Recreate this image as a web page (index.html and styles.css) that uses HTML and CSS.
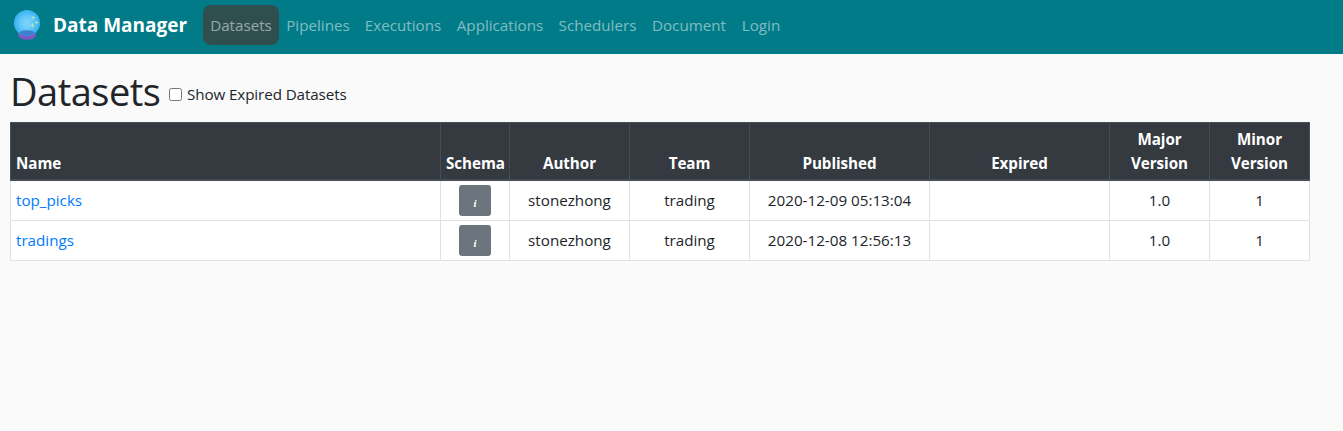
FILE: index.html
```html
<!DOCTYPE html>
<html lang="en">
<head>
<meta charset="utf-8">
<title>Data Manager</title>
<link rel="stylesheet" href="styles.css">
</head>
<body>
<nav class="navbar">
  <a class="brand">
    <svg class="logo" viewBox="0 0 32 32" width="32" height="32">
      <defs>
        <radialGradient id="ball"><stop offset="0" stop-color="#81d4fa"/><stop offset=".45" stop-color="#68cbf9"/><stop offset="1" stop-color="#35b2f0"/></radialGradient>
        <clipPath id="ball-clip"><circle cx="17" cy="14" r="12.7"/></clipPath>
      </defs>
      <ellipse cx="17" cy="26" rx="9" ry="4.8" fill="#7e57c2"/>
      <circle cx="17" cy="14" r="13" fill="url(#ball)"/>
      <ellipse cx="17" cy="26" rx="9" ry="4.8" fill="#3f7fd2" clip-path="url(#ball-clip)"/>
      <path d="M23.2 6.7v4M21.2 8.7h4M26.7 12v3M25.2 13.5h3M22.5 14.6v4M20.5 16.6h4" stroke="#b5e3b5" stroke-width="1"/>
    </svg>
    <span class="brand-name">Data Manager</span>
  </a>
  <ul class="nav">
    <li class="active datasets"><a>Datasets</a></li>
    <li class="pipelines"><a>Pipelines</a></li>
    <li class="executions"><a>Executions</a></li>
    <li class="applications"><a>Applications</a></li>
    <li class="schedulers"><a>Schedulers</a></li>
    <li class="document"><a>Document</a></li>
    <li class="login"><a>Login</a></li>
  </ul>
</nav>
<main class="page">
  <div class="heading">
    <h1>Datasets</h1>
    <label class="filter"><input type="checkbox"><span>Show Expired Datasets</span></label>
  </div>
  <table class="datasets-table">
    <colgroup><col class="c-name"><col class="c-schema"><col class="c-person"><col class="c-person"><col class="c-time"><col class="c-time"><col class="c-version"><col class="c-version"></colgroup>
    <thead>
      <tr><th class="left">Name</th><th>Schema</th><th>Author</th><th>Team</th><th>Published</th><th>Expired</th><th>Major<br>Version</th><th>Minor<br>Version</th></tr>
    </thead>
    <tbody>
      <tr><td class="left"><a>top_picks</a></td><td class="schema"><button class="info"><i>i</i></button></td><td>stonezhong</td><td>trading</td><td>2020-12-09 05:13:04</td><td></td><td>1.0</td><td>1</td></tr>
      <tr><td class="left"><a>tradings</a></td><td class="schema"><button class="info"><i>i</i></button></td><td>stonezhong</td><td>trading</td><td>2020-12-08 12:56:13</td><td></td><td>1.0</td><td>1</td></tr>
    </tbody>
  </table>
</main>
</body>
</html>
```
FILE: styles.css
```css
* { box-sizing: border-box; }
body {
  margin: 0;
  background: #fafafa;
  color: #212529;
  font: 15.2px/24px "Open Sans", "Noto Sans", sans-serif;
}
.navbar {
  display: flex;
  align-items: flex-start;
  height: 54px;
  padding: 5px 10px;
  background: #007b87;
}
.brand { display: flex; align-items: center; height: 40px; width: 193px; }
.logo { flex: none; }
.brand-name { margin-left: 11px; color: #fff; font-size: 19px; font-weight: 700; white-space: nowrap; }
.nav { display: flex; margin: 0; padding: 0; list-style: none; }
.nav li {
  height: 40px;
  padding: 8px 0;
  border-radius: 8px;
  text-align: center;
  color: rgba(255, 255, 255, .5);
  white-space: nowrap;
}
.nav .active { background: #2f4f4f; }
.nav .datasets { width: 76px; }
.nav .pipelines { width: 78px; }
.nav .executions { width: 92px; }
.nav .applications { width: 102px; }
.nav .schedulers { width: 93px; }
.nav .document { width: 90px; }
.nav .login { width: 54px; }
.page { padding: 14px 10px 0; }
.heading { display: flex; align-items: flex-start; height: 54px; }
h1 { margin: 0; width: 159px; font-size: 38px; font-weight: 400; line-height: 47px; letter-spacing: -.5px; }
.filter { display: flex; align-items: center; margin-top: 14px; letter-spacing: -.1px; }
.filter input { margin: 0 5px 0 0; width: 13px; height: 13px; }
.datasets-table {
  width: 1300px;
  table-layout: fixed;
  border-collapse: collapse;
  background: #fff;
}
.c-name { width: 430px; }
.c-schema { width: 69px; }
.c-person { width: 120px; }
.c-time { width: 180px; }
.c-version { width: 100px; }
th, td { padding: 0 5px; border: 1px solid #dee2e6; text-align: center; }
th {
  height: 57.5px;
  padding-bottom: 4px;
  vertical-align: bottom;
  background: #343a40;
  border-color: #454d55;
  border-bottom-width: 2px;
  color: #fff;
  font-weight: 700;
  letter-spacing: -.05px;
  white-space: nowrap;
}
td { height: 40px; padding-bottom: 1px; }
.schema { padding-bottom: 0; }
.left { text-align: left; }
td a { color: #007bff; }
.info {
  display: block;
  width: 32px;
  height: 31px;
  margin: 0 auto;
  padding: 6px 0 0;
  border: 0;
  border-radius: 3px;
  background: #6c757d;
  color: #fff;
  font: bold 11px/24px "Liberation Serif", serif;
}
```
